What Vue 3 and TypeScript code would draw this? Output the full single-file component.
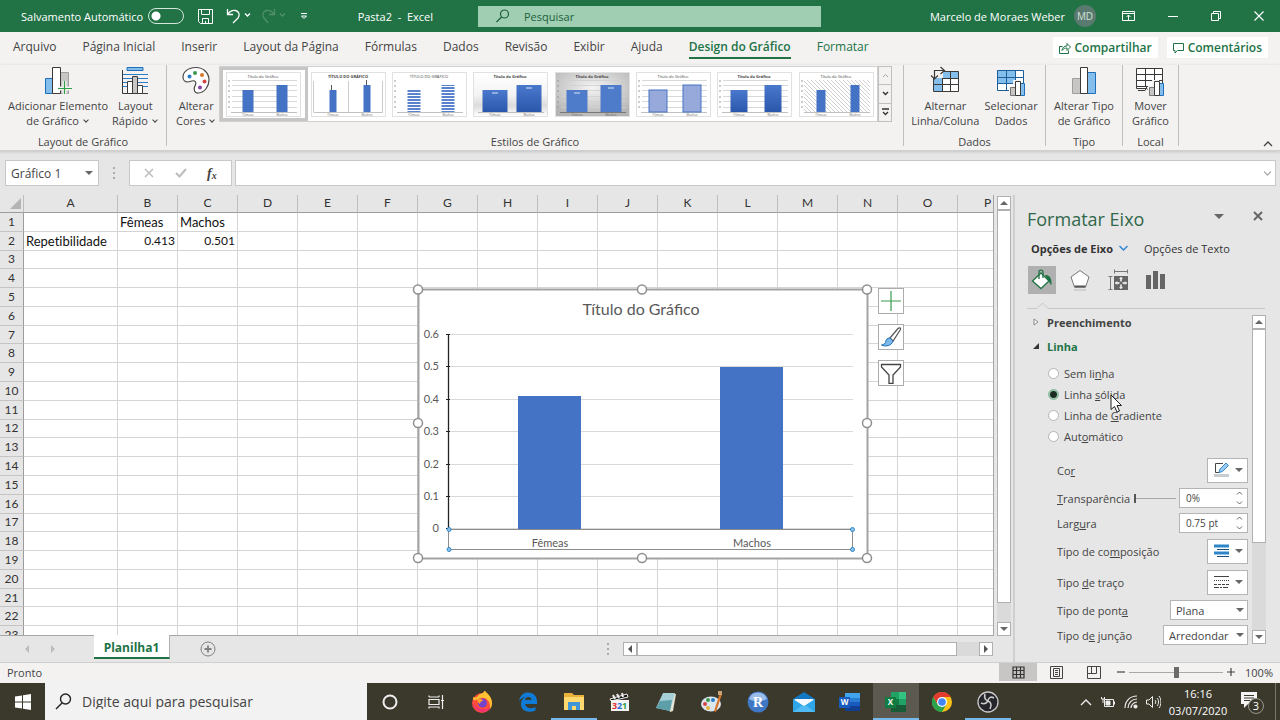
<script setup lang="ts">
import { ref } from 'vue'

interface Tab { label: string; kind?: 'active' | 'context' }
interface Thumb { id: string; title: string; w: number; fill: string; stroke: string; bg: string; weight: number; lines: boolean }
interface Row { n: number; cells: string[] }

const tabs: Tab[] = [
  { label: 'Arquivo' },
  { label: 'Página Inicial' },
  { label: 'Inserir' },
  { label: 'Layout da Página' },
  { label: 'Fórmulas' },
  { label: 'Dados' },
  { label: 'Revisão' },
  { label: 'Exibir' },
  { label: 'Ajuda' },
  { label: 'Design do Gráfico', kind: 'active' },
  { label: 'Formatar', kind: 'context' },
]

const thumbs: Thumb[] = [
  { id: 't1', title: 'Título do Gráfico', w: 11, fill: '#4472c4', stroke: 'none', bg: '#fff', weight: 400, lines: true },
  { id: 't2', title: 'TÍTULO DO GRÁFICO', w: 7, fill: '#4472c4', stroke: 'none', bg: '#fff', weight: 700, lines: false },
  { id: 't3', title: 'TÍTULO DO GRÁFICO', w: 13, fill: 'url(#stripes)', stroke: 'none', bg: '#fff', weight: 400, lines: false },
  { id: 't4', title: 'Título do Gráfico', w: 25, fill: 'url(#deep)', stroke: 'none', bg: 'url(#floor)', weight: 700, lines: false },
  { id: 't5', title: 'Título do Gráfico', w: 21, fill: '#4f7bcb', stroke: 'none', bg: 'url(#silver)', weight: 700, lines: true },
  { id: 't6', title: 'Título do Gráfico', w: 18, fill: '#97a9da', stroke: '#4472c4', bg: '#fff', weight: 400, lines: true },
  { id: 't7', title: 'Título do Gráfico', w: 17, fill: 'url(#deep)', stroke: 'none', bg: '#fff', weight: 700, lines: true },
  { id: 't8', title: 'Título do Gráfico', w: 9, fill: '#4472c4', stroke: 'none', bg: '#fff', weight: 400, lines: false },
]

const columns = 'ABCDEFGHIJKLMNOP'.split('')
const values: Record<number, string[]> = {
  1: ['', 'Fêmeas', 'Machos'],
  2: ['Repetibilidade', '0.413', '0.501'],
}
const rows: Row[] = Array.from({ length: 23 }, (_, i) => ({
  n: i + 1,
  cells: columns.map((_c, c) => values[i + 1]?.[c] ?? ''),
}))
const isNumber = (s: string): boolean => /^\d/.test(s)

const ticks = ['0.6', '0.5', '0.4', '0.3', '0.2', '0.1', '0']
const tickY = (i: number): number => 50 + Math.round(i * 32.4)

const lineKinds = [
  { id: 'none', parts: ['Sem li', 'n', 'ha'] },
  { id: 'solid', parts: ['Linha ', 's', 'ólida'] },
  { id: 'gradient', parts: ['Linha de ', 'G', 'radiente'] },
  { id: 'auto', parts: ['Aut', 'o', 'mático'] },
]
const lineKind = ref('solid')
const transparency = ref(0)
const zoom = ref(50)
</script>

<template>
  <div class="window">
    <svg class="defs" width="0" height="0" aria-hidden="true">
      <defs>
        <pattern id="stripes" width="4" height="3" patternUnits="userSpaceOnUse">
          <rect width="4" height="3" fill="#fff" /><rect width="4" height="2" fill="#5b83cd" />
        </pattern>
        <pattern id="hatch" width="4" height="4" patternUnits="userSpaceOnUse">
          <rect width="4" height="4" fill="#fff" /><path d="M0 0l4 4" stroke="#c4c4c4" stroke-width=".8" />
        </pattern>
        <linearGradient id="deep" x1="0" y1="0" x2="0" y2="1"><stop offset="0" stop-color="#4a78cd" /><stop offset="1" stop-color="#2b57ab" /></linearGradient>
        <linearGradient id="floor" x1="0" y1="0" x2="0" y2="1"><stop offset="0" stop-color="#fff" /><stop offset=".5" stop-color="#f4f4f4" /><stop offset=".75" stop-color="#dcdcdc" /><stop offset="1" stop-color="#fff" /></linearGradient>
        <radialGradient id="silver" cy=".35" r=".7"><stop offset="0" stop-color="#f4f4f4" /><stop offset="1" stop-color="#b3b3b3" /></radialGradient>
      </defs>
    </svg>

    <header class="titlebar">
      <div class="title-left">
        <label class="autosave">Salvamento Automático <input type="checkbox" role="switch" /></label>
        <button aria-label="Salvar"><svg width="16" height="16" fill="none" stroke="#fff"><path d="M.5 1.5h14v14h-12l-2-2zM3.5 1.5v5h8v-5M4.5 15.5v-5h6v5M7.5 13v2" /></svg></button>
        <button class="undo" aria-label="Desfazer"><svg width="26" height="16" fill="none" stroke="#fff" stroke-width="1.3"><path d="M1.5 1v5.500H7M1.500 6.500C4 3 7 2 9.500 2.500c4 1 4.500 5 2.500 7.500L7 15M19 5.500l2.500 2.500 2.500-2.500" /></svg></button>
        <button class="redo" aria-label="Refazer"><svg width="26" height="16" fill="none" stroke="#4f9069" stroke-width="1.3"><path d="M13.500 1v5.500H8M13.500 6.500C11 3 8 2 5.500 2.500c-4 1-4.500 5-2.500 7.500L7 15M19 5.500l2.500 2.500 2.500-2.500" /></svg></button>
        <button aria-label="Personalizar"><svg width="8" height="8" fill="none" stroke="#fff"><path d="M1 1.500h6M1.500 4h5L4 6.500z" /></svg></button>
        <span class="doc">Pasta2&nbsp; -&nbsp; Excel</span>
      </div>
      <label class="search">
        <svg width="14" height="14" fill="none" stroke="#1d5f3b" stroke-width="1.2"><circle cx="8.500" cy="5" r="4" /><path d="M5.500 8L.5 13" /></svg>
        <input type="text" placeholder="Pesquisar" aria-label="Pesquisar" />
      </label>
      <div class="title-right">
        <span>Marcelo de Moraes Weber</span>
        <span class="avatar">MD</span>
        <button aria-label="Opções da faixa"><svg width="13" height="10" fill="none" stroke="#fff"><path d="M.5.5h12v9H.5zM.5 2.500h12M6.500 9V4M4.500 6l2-2 2 2" /></svg></button>
        <button aria-label="Minimizar"><svg width="10" height="10" stroke="#fff"><path d="M0 5.500h10" /></svg></button>
        <button aria-label="Restaurar"><svg width="10" height="10" fill="none" stroke="#fff"><path d="M.5 2.500h7v7h-7zM2.500 2.500v-2h7v7h-2" /></svg></button>
        <button aria-label="Fechar"><svg width="10" height="10" stroke="#fff" stroke-width="1.2"><path d="M.5.5l9 9M9.500.5l-9 9" /></svg></button>
      </div>
    </header>

    <nav class="tabs">
      <button v-for="t in tabs" :key="t.label" :class="t.kind">{{ t.label }}</button>
      <div class="tab-actions">
        <button><svg width="12" height="12" fill="none" stroke="#217346"><path d="M3.500 4.500h-3v7h9v-3M3 8.500c.5-3 2-4.500 5-4.500V1.500L11.500 5 8 8.500V6C6 6 4.500 6.500 3 8.500z" /></svg>Compartilhar</button>
        <button><svg width="12" height="12" fill="none" stroke="#217346"><path d="M.5 1.500h10v7h-6l-2.500 2.500V8.500H.5z" /></svg>Comentários</button>
      </div>
    </nav>

    <section class="ribbon">
      <div class="group g-layout">
        <div class="tools">
          <button class="tool">
            <svg width="28" height="28"><path d="M1.500 12.500h7v15h-7z" fill="#83beec" stroke="#1e6fb8" /><path d="M16.500 6.500h8v21h-8z" fill="#c8c6c4" stroke="#a19f9d" /><path d="M8.500 1.500h8v26h-8z" fill="#fff" stroke="#3b3a39" /><path d="M20.500 15v14M14 22.500h14" stroke="#f3f2f1" stroke-width="4" /><path d="M20.500 15v13M14 22.500h14" stroke="#2f9e44" stroke-width="1.2" /></svg>
            <span>Adicionar Elemento<br />de Gráfico <i class="chev"></i></span>
          </button>
          <button class="tool">
            <svg width="28" height="28" fill="none"><path d="M6 1.500h16v3H6z" fill="#83beec" stroke="#1e6fb8" /><path d="M2 8.500h25M2 12.500h25M2 16.500h25M2 20.500h25" stroke="#2b7cc7" /><path d="M1.500 4v23.500H27" stroke="#3b3a39" /><path d="M6.500 15.500h5v12h-5zM16.500 19.500h5v8h-5z" fill="#fff" stroke="#3b3a39" /><path d="M11.500 10.500h5v17h-5z" fill="#c8c6c4" stroke="#3b3a39" /></svg>
            <span>Layout<br />Rápido <i class="chev"></i></span>
          </button>
        </div>
        <div class="caption">Layout de Gráfico</div>
      </div>

      <div class="group g-styles">
        <div class="tools">
          <button class="tool">
            <svg width="28" height="28"><path d="M14 1.500C6 1.500 1 6 1 11c0 3 2 5 4.500 5 3 0 4.500-2 7-1s1 4 0 6c-1 3 0 6.500 4 6 6-.5 10.500-6.500 10.500-13C27 6.500 21 1.500 14 1.500z" fill="#fff" stroke="#484644" stroke-width="1.2" /><circle cx="7.500" cy="10.500" r="2" fill="#2b7cc7" /><circle cx="13" cy="7" r="2" fill="#3a9b50" /><circle cx="20" cy="9" r="2" fill="#d8772a" /><circle cx="22.500" cy="15.500" r="2" fill="#d64545" /><circle cx="18" cy="21.500" r="2" fill="#8a3fa8" /></svg>
            <span>Alterar<br />Cores <i class="chev"></i></span>
          </button>
          <div class="gallery">
            <button v-for="(t, i) in thumbs" :key="t.id" :class="['thumb', { picked: i === 0 }]" :aria-label="'Estilo ' + (i + 1)">
              <svg width="75" height="45" viewBox="0 0 75 45">
                <rect x=".5" y=".5" width="74" height="44" :fill="t.bg" stroke="#e1e1e1" />
                <path v-if="t.lines" d="M6 8.500h65M6 13.500h65M6 18.500h65M6 24.500h65M6 29.500h65M6 35.500h65" stroke="#cfcfcf" stroke-width=".8" />
                <path v-if="t.id === 't2'" d="M2.500 9v31.500h69V9M37.500 9v31" fill="none" stroke="#ccc" />
                <path v-if="t.id === 't2'" d="M20.500 13v6M55.500 8v6" stroke="#555" />
                <rect v-if="t.id === 't8'" x="5" y="8" width="66" height="32" fill="url(#hatch)" />
                <path d="M5 40.500h66" :stroke="t.id === 't5' ? '#777' : '#c0c0c0'" />
                <path v-if="t.id !== 't2' && t.id !== 't4'" d="M2 9h2M2 14h2M2 19h2M2 25h2M2 30h2M2 35h2" stroke="#999" />
                <rect :x="22 - t.w / 2" :y="18" :width="t.w" height="22" :fill="t.fill" :stroke="t.stroke" />
                <rect :x="56 - t.w / 2" :y="13" :width="t.w" height="27" :fill="t.fill" :stroke="t.stroke" />
                <path v-if="t.id === 't4' || t.id === 't5'" d="M19 21h6M53 16h6" stroke="#dbe6fa" />
                <text x="37" y="6" text-anchor="middle" font-size="4" :font-weight="t.weight" fill="#444">{{ t.title }}</text>
                <text x="22" y="44" text-anchor="middle" font-size="3" fill="#666">Fêmeas</text>
                <text x="56" y="44" text-anchor="middle" font-size="3" fill="#666">Machos</text>
              </svg>
            </button>
          </div>
          <div class="gallery-nav">
            <button aria-label="Anterior"><svg width="7" height="5" fill="none" stroke="#a9a7a5"><path d="M1 4l2.500-2.500L6 4" /></svg></button>
            <button aria-label="Próximo"><svg width="7" height="5" fill="none" stroke="#333" stroke-width="1.4"><path d="M1 1l2.500 2.500L6 1" /></svg></button>
            <button aria-label="Mais"><svg width="7" height="8" fill="none" stroke="#333" stroke-width="1.3"><path d="M0 1h7M1 4l2.500 2.500L6 4" /></svg></button>
          </div>
        </div>
        <div class="caption">Estilos de Gráfico</div>
      </div>

      <div class="group g-data">
        <div class="tools">
          <button class="tool">
            <svg width="30" height="28"><path d="M3.500 6.500h25v19h-25z" fill="#fff" /><path d="M12 6h17v6H12zM4 12h8v14H4z" fill="#83beec" /><path d="M3.500 12v13.500h25V5.500H14M3.500 18.500h25M12 12.500h16.500M12.500 12v13.500M20.500 5.500v20" fill="none" stroke="#3b3a39" /><path d="M1 0h12v12H1z" fill="#f3f2f1" /><path d="M4.500 13V4.500H14M1 9.500l3.500 3.500L8 9.500M10.500 1l4 3.500-4 3.500" fill="none" stroke="#3b3a39" stroke-width="1.2" /></svg>
            <span>Alternar<br />Linha/Coluna</span>
          </button>
          <button class="tool">
            <svg width="30" height="30"><path d="M1.500 4.500h26v20h-26z" fill="#fff" /><path d="M1 4h18v13H1z" fill="#83beec" /><path d="M1.500 4.500h26v20h-26zM1.500 11.500h26M1.500 17.500h26M10.500 4.500v20M19.500 4.500v20" fill="none" stroke="#1e5f9b" /><path d="M13 20h4v-6h7v3h6v13H13z" fill="#f3f2f1" /><path d="M14.500 21.500h5v8h-5z" fill="#c8c6c4" stroke="#777" /><path d="M24.500 17.500h4v12h-4z" fill="#83beec" stroke="#1e6fb8" /><path d="M19.500 15.500h5v14h-5z" fill="#fff" stroke="#3b3a39" /></svg>
            <span>Selecionar<br />Dados</span>
          </button>
        </div>
        <div class="caption">Dados</div>
      </div>

      <div class="group g-type">
        <div class="tools">
          <button class="tool">
            <svg width="26" height="28"><path d="M1.500 12.500h8v15h-8z" fill="#c8c6c4" stroke="#a19f9d" /><path d="M16.500 6.500h8v21h-8z" fill="#83beec" stroke="#1e6fb8" /><path d="M9.500 1.500h7v26h-7z" fill="#fff" stroke="#3b3a39" /></svg>
            <span>Alterar Tipo<br />de Gráfico</span>
          </button>
        </div>
        <div class="caption">Tipo</div>
      </div>

      <div class="group g-place">
        <div class="tools">
          <button class="tool">
            <svg width="30" height="30"><path d="M1.500 2.500h26v22H14l-2-2H1.500z" fill="#fff" stroke="#3b3a39" /><path d="M1.500 8.500h26M1.500 14.500h26M1.500 20.500h26M10.500 2.500v18M19.500 2.500v18M3 24.500h7l2-4" fill="none" stroke="#3b3a39" /><path d="M13 20h4v-6h7v3h6v13H13z" fill="#f3f2f1" /><path d="M14.500 21.500h5v8h-5z" fill="#c8c6c4" stroke="#777" /><path d="M24.500 17.500h4v12h-4z" fill="#83beec" stroke="#1e6fb8" /><path d="M19.500 15.500h5v14h-5z" fill="#fff" stroke="#3b3a39" /></svg>
            <span>Mover<br />Gráfico</span>
          </button>
        </div>
        <div class="caption">Local</div>
      </div>
      <div class="ribbon-end">
        <button aria-label="Recolher"><svg width="10" height="6" fill="none" stroke="#444" stroke-width="1.3"><path d="M1 5l4-4 4 4" /></svg></button>
      </div>
    </section>

    <div class="formula">
      <label class="namebox"><input type="text" value="Gráfico 1" aria-label="Caixa de nome" /><i class="tri"></i></label>
      <span class="grip"></span>
      <div class="fx">
        <button aria-label="Cancelar"><svg width="10" height="10" stroke="#bdbdbd" stroke-width="1.5"><path d="M1 1l8 8M9 1L1 9" /></svg></button>
        <button aria-label="Inserir"><svg width="12" height="10" fill="none" stroke="#bdbdbd" stroke-width="2"><path d="M1 5l3.500 3.500L11 1" /></svg></button>
        <button class="fx-label" aria-label="Inserir função">f<small>x</small></button>
      </div>
      <label class="fbar"><input type="text" aria-label="Barra de fórmulas" /><svg width="7" height="5" fill="none" stroke="#b0b0b0" stroke-width="1.3"><path d="M0 .5l3.500 3.500L7 .5" /></svg></label>
    </div>

    <main class="work">
      <div class="book">
        <div class="sheet-row">
          <div class="sheet">
            <table>
              <colgroup><col class="c-head" /><col class="c-a" /><col v-for="n in 15" :key="n" class="c-n" /></colgroup>
              <thead>
                <tr><th class="corner"><svg width="11" height="11"><path d="M11 0v11H0z" fill="#b4b4b4" /></svg></th><th v-for="c in columns" :key="c">{{ c }}</th></tr>
              </thead>
              <tbody>
                <tr v-for="r in rows" :key="r.n">
                  <th>{{ r.n }}</th>
                  <td v-for="(v, i) in r.cells" :key="i" :class="{ num: isNumber(v) }">{{ v }}</td>
                </tr>
              </tbody>
            </table>

            <svg class="chart" width="466" height="286" viewBox="-8 -5 466 286">
              <rect x=".5" y=".5" width="449" height="269" fill="#fff" stroke="#a3a3a3" stroke-width="2" />
              <text x="223" y="26" text-anchor="middle" class="chart-title">Título do Gráfico</text>
              <g v-for="(t, i) in ticks" :key="t">
                <path :d="`M32 ${tickY(i) - 4.5}H435`" stroke="#d9d9d9" />
                <path :d="`M28 ${tickY(i) - 4.5}h4`" stroke="#222" />
                <text x="21" :y="tickY(i) - 1" text-anchor="end" class="chart-label">{{ t }}</text>
              </g>
              <path d="M100 107h63v134h-63zM302 78h63v163h-63z" fill="#4472c4" />
              <path d="M30.500 45v195" stroke="#222" stroke-width="1.3" />
              <rect x="30.500" y="240.500" width="404" height="20" fill="none" stroke="#8c8c8c" />
              <text x="132" y="258" text-anchor="middle" class="chart-label">Fêmeas</text>
              <text x="334" y="258" text-anchor="middle" class="chart-label">Machos</text>
              <g fill="#8fc3ea" stroke="#2e86c8"><circle cx="31" cy="240.500" r="2" /><circle cx="434.500" cy="240.500" r="2" /><circle cx="31" cy="260.500" r="2" /><circle cx="434.500" cy="260.500" r="2" /></g>
              <g fill="#fff" stroke="#8f8f8f" stroke-width="1.5"><circle cx="0" cy="0.500" r="4.500" /><circle cx="224" cy="0.500" r="4.500" /><circle cx="449" cy="0.500" r="4.500" /><circle cx="0" cy="134" r="4.500" /><circle cx="449" cy="134" r="4.500" /><circle cx="0" cy="269" r="4.500" /><circle cx="224" cy="269" r="4.500" /><circle cx="449" cy="269" r="4.500" /></g>
            </svg>
            <div class="chart-tools">
              <button aria-label="Elementos do gráfico"><svg width="22" height="22" stroke="#3a9b50" stroke-width="1.2"><path d="M11 1v20M1 11h20" /></svg></button>
              <button aria-label="Estilos de gráfico"><svg width="22" height="22"><path d="M10 12L18 2.500c1-1 3-1 2.500 1L13 15z" fill="#fff" stroke="#555" stroke-width="1.2" /><path d="M10 12c-3 0-4 1.500-4.500 4.500C5 18 3 18.500 1.500 19c4 2 10 1 11.500-4z" fill="#7db8e8" stroke="#1e6fb8" /></svg></button>
              <button aria-label="Filtros de gráfico"><svg width="22" height="22"><path d="M1.500 2.500h19v2.500L13 13v8.500H9V13L1.500 5z" fill="#fff" stroke="#444" stroke-width="1.3" /></svg></button>
            </div>
          </div>
          <div class="vscroll">
            <button aria-label="Acima"><i class="tri up"></i></button>
            <div class="track"><div class="bar"></div></div>
            <button aria-label="Abaixo"><i class="tri"></i></button>
          </div>
        </div>
        <div class="sheet-tabs">
          <i class="tri left pale"></i><i class="tri right pale"></i>
          <button class="sheet-tab">Planilha1</button>
          <button class="add" aria-label="Nova planilha"><svg width="16" height="16" fill="none" stroke="#808080"><circle cx="8" cy="8" r="7" /><path d="M8 4.500v7M4.500 8h7" stroke-width="1.8" /></svg></button>
          <span class="grip tab-grip"></span>
          <div class="hscroll">
            <button aria-label="Esquerda"><i class="tri left"></i></button>
            <div class="track"><div class="bar"></div></div>
            <button aria-label="Direita"><i class="tri right"></i></button>
          </div>
        </div>
      </div>

      <aside class="pane">
        <div class="pane-title"><h2>Formatar Eixo</h2><i class="tri big"></i><button aria-label="Fechar painel"><svg width="10" height="10" stroke="#666" stroke-width="2"><path d="M1 1l8 8M9 1L1 9" /></svg></button></div>
        <div class="pane-tabs">
          <button class="on">Opções de Eixo <svg width="9" height="6" fill="none" stroke="#2e86d8" stroke-width="1.4"><path d="M.5 1l4 4 4-4" /></svg></button>
          <button>Opções de Texto</button>
        </div>
        <div class="pane-icons">
          <button class="on" aria-label="Preenchimento e linha"><svg width="24" height="24"><path d="M15 7c4 0 7 2 6.500 10-2-1-2-4-4.500-6z" fill="#217346" /><path d="M11 5l8 8-8 7.500L2.500 13z" fill="#fff" stroke="#217346" stroke-width="1.3" /><path d="M9 11V4c0-2.500 4-2.500 4 0v6" fill="none" stroke="#217346" stroke-width="1.3" /></svg></button>
          <button aria-label="Efeitos"><svg width="22" height="24"><path d="M11 2.500l9 6.500-3.500 10h-11L2 9z" fill="#fff" stroke="#777" /><path d="M5.500 18.500h11" stroke="#555" stroke-width="2" /><path d="M5 22h12" stroke="#d0d0d0" stroke-width="2" /></svg></button>
          <button aria-label="Tamanho"><svg width="22" height="24"><path d="M7 8h14v14H7z" fill="#666" /><path d="M7.500 3.500h13M7.500 1.500v4M20.500 1.500v4M3.500 8.500v13M1.500 8.500h4M1.500 21.500h4" stroke="#777" /><path d="M14 9.500v11M8.500 15h11" stroke="#fff" stroke-width="1.5" stroke-dasharray="4 3" /><path d="M12.500 11L14 9.500l1.500 1.500M12.500 19l1.500 1.500 1.500-1.500M10 13.500L8.500 15l1.500 1.500M18 13.500l1.500 1.500-1.500 1.500" fill="none" stroke="#fff" /></svg></button>
          <button aria-label="Opções de eixo"><svg width="20" height="24" fill="#666"><path d="M0 7h5v14H0zM7 3h5v18H7zM14 6h5v15h-5z" /></svg></button>
        </div>
        <svg class="notch" width="238" height="9" fill="none" stroke="#c8c8c8"><path d="M0 7.500h10L15.500 2 21 7.500h217" /></svg>
        <div class="pane-body">
          <div class="options">
            <button class="section"><svg width="6" height="8" fill="#fff" stroke="#888"><path d="M1 1l4 3-4 3z" /></svg>Preenchimento</button>
            <button class="section open"><svg width="6" height="8" fill="#333"><path d="M6 1v6H0z" /></svg>Linha</button>
            <div class="radios">
              <label v-for="k in lineKinds" :key="k.id"><input v-model="lineKind" type="radio" name="line" :value="k.id" /><span>{{ k.parts[0] }}<u>{{ k.parts[1] }}</u>{{ k.parts[2] }}</span></label>
            </div>
            <div class="fields">
              <div class="field tall"><span>Co<u>r</u></span><button class="pick" aria-label="Cor"><svg width="16" height="16"><path d="M9 1.500H1.500v9H5" fill="none" stroke="#444" /><path d="M5 10.500l1-3.500 6-6 2.500 2.500-6 6z" fill="#9dcbef" stroke="#2e86c8" /><path d="M0 12h15v3H0z" fill="#c8cdd2" /></svg><i class="tri"></i></button></div>
              <div class="field"><label for="tr"><u>T</u>ransparência</label><input v-model="transparency" class="slider" type="range" aria-label="Transparência" min="0" max="100" /><div class="spin"><input id="tr" type="text" value="0%" /><svg width="7" height="14" fill="none" stroke="#666"><path d="M1 3.500L3.500 1 6 3.500M1 10.500L3.500 13 6 10.500" /></svg></div></div>
              <div class="field"><label for="lw">Larg<u>u</u>ra</label><div class="spin"><input id="lw" type="text" value="0.75 pt" /><svg width="7" height="14" fill="none" stroke="#666"><path d="M1 3.500L3.500 1 6 3.500M1 10.500L3.500 13 6 10.500" /></svg></div></div>
              <div class="field tall"><span>Tipo de co<u>m</u>posição</span><button class="pick" aria-label="Tipo de composição"><svg width="16" height="14"><path d="M0 2h15M0 9h15" stroke="#2e86c8" stroke-width="3" /><path d="M3 5.500h12M3 12.500h12" stroke="#1f4e79" /></svg><i class="tri"></i></button></div>
              <div class="field tall"><span>Tipo <u>d</u>e traço</span><button class="pick" aria-label="Tipo de traço"><svg width="16" height="14" stroke="#444"><path d="M0 1.500h15" /><path d="M0 5.500h15" stroke-dasharray="1 1" /><path d="M0 9.500h15" stroke-dasharray="3 1" /><path d="M0 12.500h15" stroke-dasharray="5 1 2 1" /></svg><i class="tri"></i></button></div>
              <div class="field"><label for="cap">Tipo de pont<u>a</u></label><div class="drop cap"><select id="cap"><option>Plana</option><option>Quadrada</option></select><i class="tri"></i></div></div>
              <div class="field"><label for="join">Tipo d<u>e</u> junção</label><div class="drop join"><select id="join"><option>Arredondar</option><option>Bisel</option></select><i class="tri"></i></div></div>
            </div>
          </div>
          <div class="pscroll">
            <button aria-label="Rolar acima"><i class="tri up"></i></button>
            <div class="track"><div class="bar"></div></div>
            <button aria-label="Rolar abaixo"><i class="tri"></i></button>
          </div>
        </div>
        <svg class="cursor" width="14" height="20"><path d="M1 1v14.500l3.500-3 2.500 5.500 2.500-1-2.500-5.500h4.500z" fill="#fff" stroke="#222" /></svg>
      </aside>
    </main>

    <footer class="status">
      <span class="ready">Pronto</span>
      <button class="view on" aria-label="Normal"><svg width="13" height="13" fill="none" stroke="#333" stroke-width="1.2"><path d="M1 1h11v11H1zM1 4.500h11M1 8.500h11M4.500 1v11M8.500 1v11" /></svg></button>
      <button class="view" aria-label="Layout da Página"><svg width="13" height="13" fill="none" stroke="#444"><path d="M.5.500h12v12H.5zM3.500 2.500h6v8h-6zM5 4.500h3M5 6.500h3M5 8.500h3" /></svg></button>
      <button class="view" aria-label="Quebra de página"><svg width="14" height="13" fill="none" stroke="#444"><path d="M.5.500h13v12H.5zM4.500.5v7M9.500.5v7M.5 7.500h9" /></svg></button>
      <button class="pm" aria-label="Reduzir"><svg width="8" height="8" stroke="#444" stroke-width="1.2"><path d="M0 4h8" /></svg></button>
      <input v-model="zoom" class="zoom" type="range" min="0" max="100" aria-label="Zoom" />
      <button class="pm" aria-label="Ampliar"><svg width="8" height="8" stroke="#444" stroke-width="1.2"><path d="M0 4h8M4 0v8" /></svg></button>
      <span class="pct">100%</span>
    </footer>

    <div class="taskbar">
      <button class="start" aria-label="Iniciar"><svg width="16" height="16" fill="#fff"><path d="M0 2.500L7 1.500v6H0zM8 1.300L16 0v7.500H8zM0 8.500h7v6l-7-1zM8 8.500h8V16l-8-1.300z" /></svg></button>
      <label class="tsearch"><svg width="17" height="17" fill="none" stroke="#222" stroke-width="1.4"><circle cx="10.500" cy="6" r="5" /><path d="M7 10L1 16" /></svg><input type="text" placeholder="Digite aqui para pesquisar" aria-label="Digite aqui para pesquisar" /></label>
      <button class="app" aria-label="Cortana"><svg width="18" height="18" fill="none" stroke="#eee" stroke-width="2"><circle cx="9" cy="9" r="6.500" /></svg></button>
      <button class="app" aria-label="Visão de tarefas"><svg width="18" height="18" fill="none" stroke="#eee" stroke-width="1.2"><path d="M2 6.500h10v5H2zM2 4V2.500M12 4V2.500M2 4h10M2 15.500V14h10v1.500M15.500 2v14M14 7.500h3" /></svg></button>
      <button class="app" aria-label="Firefox"><svg width="24" height="24"><circle cx="12" cy="13" r="10" fill="#ff4f3a" /><path d="M3 7c2 1 3 1 5-1 1-2 3-2 5-3 1-2 1.500-2 2-2 2 2 7 6 7 12 0 3-1 5-2 6 1-8-4-12-9-11S3 13 3 7z" fill="#ffc233" /><path d="M2.500 10c1 9 13 12 18 7-2 7-17 8-18-7z" fill="#f0307a" /><circle cx="12.500" cy="13" r="4.500" fill="#7542c9" /><path d="M7 9c3-1 5 0 6 2-2 0-3 1-3 3-2-1-3-3-3-5z" fill="#ffa02e" /></svg></button>
      <button class="app" aria-label="Edge"><svg width="22" height="22"><path d="M2 10C3 4 7 1.500 11 1.500c6 0 9 4 9 9.500v2H8c.5 4 6 5.500 10.500 3v3.500C11 22.500 4 20 4 13c0-4 2-6 5-7.500C6 6 3.500 8 2 10zm6-1h6.500C14.500 5 8.500 5 8 9z" fill="#0f7bd7" /></svg></button>
      <button class="app open" aria-label="Explorador"><svg width="22" height="20"><path d="M1 1h8l2 2h10v14H1z" fill="#e8b23a" /><path d="M1 5h20v13H1z" fill="#ffd970" /><path d="M5 10h12v8h-4v-4H9v4H5z" fill="#3f97d8" /></svg></button>
      <button class="app" aria-label="Media Player Classic"><svg width="22" height="22"><path d="M1 8l17-5 1 3L2 10z" fill="#111" stroke="#eee" /><path d="M4 4l2 4M8 3l2 4M13 2l1 4" stroke="#eee" stroke-width="2" /><path d="M2 9h18v11H2z" fill="#f4f4f4" /><text y="18" font-size="9" font-weight="700"><tspan x="3" fill="#d33">3</tspan><tspan x="8" fill="#2a6fd0">2</tspan><tspan x="13" fill="#2f9e44">1</tspan></text></svg></button>
      <button class="app" aria-label="Bloco de notas"><svg width="22" height="22"><path d="M8 2l13 1-3 17-3 1z" fill="#e8e4d4" /><path d="M8 2h12l-5 18-14-3z" fill="#a5d0d6" /><path d="M5 10l12-1-2 11-14-3z" fill="#5d9ea8" /></svg></button>
      <button class="app" aria-label="Paint"><svg width="24" height="22"><ellipse cx="11" cy="13" rx="10" ry="7.500" fill="#dce6ee" /><circle cx="5" cy="13" r="2" fill="#d64545" /><circle cx="8" cy="9" r="2" fill="#3a9b50" /><circle cx="13" cy="9" r="2" fill="#2b7cc7" /><circle cx="8" cy="17" r="2" fill="#e8b23a" /><path d="M20 2l2 1-6 18-2-1z" fill="#d8772a" /><path d="M18 0h4v4h-4z" fill="#c9a27a" /></svg></button>
      <button class="app" aria-label="RStudio"><svg width="22" height="22"><circle cx="11" cy="11" r="10.500" fill="#3f77c4" /><path d="M2 8a9.500 9.500 0 0 1 18 0c-5 3-13 3-18 0z" fill="#9bbce8" /><text x="11" y="16" text-anchor="middle" font-size="14" font-weight="700" class="serif" fill="#fff">R</text></svg></button>
      <button class="app" aria-label="Email"><svg width="24" height="22"><path d="M1 8l11-7 11 7v13H1z" fill="#1278c4" /><path d="M3 8h18v8H3z" fill="#e9f4fc" /><path d="M1 8l11 7 11-7v13H1z" fill="#2da6ea" /><path d="M1 21l11-8 11 8z" fill="#4fbaf3" /><path d="M2 8h20l-10 7z" fill="#f3f9fd" /></svg></button>
      <button class="app" aria-label="Word"><svg width="22" height="20"><path d="M6 1h15v5H6z" fill="#41a5ee" /><path d="M6 6h15v4H6z" fill="#2b7cd3" /><path d="M6 10h15v4H6z" fill="#185abd" /><path d="M6 14h15v5H6z" fill="#103f91" /><path d="M0 5h11v11H0z" fill="#185abd" /><text x="5.500" y="13" text-anchor="middle" font-size="8" font-weight="700" fill="#fff">W</text></svg></button>
      <button class="app open current" aria-label="Excel"><svg width="22" height="20"><path d="M6 0h15v20H6z" fill="#21a366" /><path d="M14 0h7v7h-7z" fill="#33c481" /><path d="M6 7h15v6H6z" fill="#107c41" /><path d="M6 13h15v7H6z" fill="#185c37" /><path d="M14 7h7v6h-7z" fill="#21a366" /><path d="M0 5h11v11H0z" fill="#107c41" /><text x="5.500" y="13" text-anchor="middle" font-size="8" font-weight="700" fill="#fff">X</text></svg></button>
      <button class="app" aria-label="Chrome"><svg width="22" height="22"><circle cx="11" cy="11" r="10" fill="#fbc116" /><path d="M11 6h8.700A10 10 0 0 0 2.300 6l4.300 7.500z" fill="#e33b2e" /><path d="M2.300 6a10 10 0 0 0 8.700 15l4.300-7.500H6.700z" fill="#2ba24c" /><circle cx="11" cy="11" r="5" fill="#fff" /><circle cx="11" cy="11" r="3.800" fill="#4285f4" /></svg></button>
      <button class="app open" aria-label="OBS"><svg width="22" height="22"><circle cx="11" cy="11" r="10" fill="#24242a" stroke="#c9c9c9" stroke-width="1.3" /><path d="M8 3c-1 4 0 6 3 7 0-3 3-5 6-3M11 10c3 1 4 4 2 8M11 10c-2 3-5 3-7 2" fill="none" stroke="#c9c9c9" stroke-width="1.6" /></svg></button>
      <div class="tray">
        <svg width="12" height="8" fill="none" stroke="#eee" stroke-width="1.4"><path d="M1 7l5-5 5 5" /></svg>
        <svg width="16" height="12" fill="none" stroke="#eee"><path d="M4.500 3.500h9v7h-9zM14.500 5.500v3M1.500 1v2h3V1M3 3v4" /><path d="M6 5h4v4H6z" fill="#eee" /></svg>
        <svg width="14" height="14" fill="none" stroke="#eee" stroke-width="1.2"><path d="M1 13C1 6 6 1 13 1M4 13c0-5 4-9 9-9M7 13c0-3 3-6 6-6" /><circle cx="11.500" cy="11.500" r="1.500" fill="#eee" /></svg>
        <svg width="15" height="14" fill="none" stroke="#eee"><path d="M.5 5H3l3.500-3.500v11L3 9H.5zM9 5c1 1 1 3 0 4M11 3c2 2 2 6 0 8M13 1c2.500 3 2.500 9 0 12" /></svg>
        <div class="clock"><span>16:16</span><span>03/07/2020</span></div>
        <svg class="note" width="26" height="24"><path d="M2 2h16v12H9l-4 4v-4H2z" fill="#f4f4f4" /><path d="M5 5.500h10M5 8h10M5 10.500h6" stroke="#3b382c" /><circle cx="17" cy="16" r="7.500" fill="#3b382c" stroke="#9a988e" /><text x="17" y="20" text-anchor="middle" font-size="11" fill="#fff">3</text></svg>
        <i class="peek"></i>
      </div>
    </div>
  </div>
</template>

<style>
html, body { overflow: hidden; }
</style>

<style scoped>
* { box-sizing: border-box; }
.window {
  display: flex; flex-direction: column; height: 100vh; min-height: 0;
  background: #e6e6e6; color: #444;
  font-family: "Open Sans", "Noto Sans", sans-serif; font-size: 11px; line-height: 15px;
}
.defs { position: absolute; }
button { border: 0; padding: 0; margin: 0; background: none; font: inherit; color: inherit; display: flex; align-items: center; justify-content: center; }
input, select { font: inherit; color: inherit; border: 0; padding: 0; margin: 0; background: none; min-width: 0; outline: none; }
svg { display: block; flex: none; }
.tri { display: block; flex: none; width: 0; height: 0; border: 4px solid transparent; border-top-color: #666; border-bottom-width: 0; }
.tri.up { border-top-width: 0; border-bottom: 4px solid #666; }
.tri.left { border: 4px solid transparent; border-right-color: #555; border-left-width: 0; }
.tri.right { border: 4px solid transparent; border-left-color: #555; border-right-width: 0; }
.tri.pale.left { border-right-color: #bdbdbd; }
.tri.pale.right { border-left-color: #bdbdbd; }
.tri.big { border-width: 5px 5px 0; }

.titlebar { flex: none; height: 32px; display: grid; grid-template-columns: 478px 1fr 459px; align-items: center; background: #217346; color: #fff; }
.title-left { display: flex; align-items: center; padding-left: 21px; }
.autosave { display: flex; align-items: center; gap: 5px; margin-right: 14px; white-space: nowrap; }
.autosave input { appearance: none; width: 36px; height: 16px; border: 1px solid #d5e6dc; border-radius: 8px; background: radial-gradient(circle at 7px 7px, #fff 4px, transparent 5px); }
.undo { margin-left: 12px; }
.redo { margin: 0 13px 0 9px; }
.doc { margin-left: auto; margin-right: 45px; }
.search { display: flex; align-items: center; gap: 14px; height: 21px; padding-left: 18px; background: #a0ceb2; }
.search input::placeholder { color: #1d5f3b; opacity: 1; }
.title-right { display: flex; align-items: center; justify-content: flex-end; padding-right: 16px; }
.avatar { width: 22px; height: 22px; line-height: 22px; border-radius: 11px; margin: 0 26px 0 9px; background: #5a7a70; color: #d5e0da; text-align: center; font-size: 10px; }
.title-right button + button { margin-left: 33px; }

.tabs { flex: none; height: 33px; display: flex; align-items: center; padding: 0 12px 2px 13px; gap: 26px; background: #f3f2f1; font-size: 12px; line-height: 18px; white-space: nowrap; }
.tabs > button { height: 22px; border-bottom: 2px solid transparent; }
.tabs > .active { color: #217346; font-weight: 600; border-color: #217346; }
.tabs > .context { color: #217346; }
.tab-actions { margin-left: auto; display: flex; gap: 9px; }
.tab-actions button { height: 21px; padding: 0 6px; gap: 3px; background: #fff; color: #217346; font-weight: 600; }

.ribbon { flex: none; height: 86px; display: flex; background: #f3f2f1; border-bottom: 1px solid #cfcfcf; box-shadow: 0 1px 3px #c4c4c4; position: relative; z-index: 1; }
.group { display: flex; flex-direction: column; margin-bottom: 4px; border-right: 1px solid #c0bfbe; }
.tools { display: flex; flex: 1; justify-content: center; padding-top: 1px; }
.tool { flex-direction: column; justify-content: flex-start; line-height: 15px; white-space: nowrap; }
.tool svg { height: 32px; overflow: visible; }
.caption { text-align: center; height: 14px; line-height: 20px; font-size: 11px; }
.g-layout { width: 167px; } .g-layout .tools { gap: 4px; justify-content: flex-start; padding-left: 8px; }
.g-styles { flex: 1; min-width: 0; } .g-styles .tools { justify-content: flex-start; padding-left: 9px; padding-right: 11px; }
.g-data { width: 142px; } .g-data .tools { gap: 5px; }
.g-type { width: 77px; } .g-place { width: 56px; }
.chev { display: inline-block; width: 4px; height: 4px; margin: 0 2px 3px; border: solid #444; border-width: 0 1px 1px 0; transform: rotate(45deg); }
.gallery { flex: 1; display: flex; height: 56px; margin-left: 3px; background: #fff; border: 1px solid #d2d0ce; min-width: 0; }
.thumb { flex: 1; min-width: 0; overflow: hidden; }
.thumb.picked { border: 3px solid #c6c6c6; }
.gallery-nav { display: flex; flex-direction: column; width: 14px; height: 56px; }
.gallery-nav button { flex: 1; border: 1px solid #c0bfbe; }
.gallery-nav button + button { border-top: 0; }
.ribbon-end { width: 101px; display: flex; align-items: flex-end; justify-content: flex-end; padding: 0 7px 3px 0; }

.formula { flex: none; display: flex; padding: 9px 4px 9px 5px; height: 44px; }
.formula > label, .fx { display: flex; align-items: center; background: #fff; border: 1px solid #c8c8c8; height: 26px; }
.namebox { width: 94px; padding: 0 5px 0 5px; font-size: 12px; }
.namebox input { flex: 1; }
.grip { width: 2px; height: 12px; margin: 7px 14px; background: repeating-linear-gradient(#aaa 0 2px, transparent 2px 5px); }
.fx { width: 103px; justify-content: space-around; padding: 0 4px; }
.fx-label { font-family: "Liberation Serif", serif; font-style: italic; font-weight: 700; font-size: 14px; }
.fx-label small { font-size: 10px; padding-top: 4px; }
.fbar { flex: 1; margin-left: 3px; padding-right: 4px; }
.fbar input { flex: 1; }

.work { flex: 1; min-height: 0; display: flex; }
.book { flex: 1; min-width: 0; display: flex; flex-direction: column; border-right: 2px solid #cfcfcf; }
.sheet-row { flex: 1; min-height: 0; display: flex; }
.sheet { flex: 1; min-width: 0; overflow: hidden; position: relative; border-right: 1px solid #a6a6a6; border-bottom: 1px solid #a6a6a6; }
table { border-collapse: separate; border-spacing: 0; table-layout: fixed; width: 1018px; height: 450px; font-family: Lato, sans-serif; font-size: 13px; line-height: 16px; color: #111; font-variant-ligatures: none; }
.c-head { width: 24px; } .c-a { width: 94px; } .c-n { width: 60px; }
th, td { padding: 0 2px; border-right: 1px solid #d4d4d4; border-bottom: 1px solid #d4d4d4; white-space: nowrap; overflow: hidden; }
td { background: #fff; }
th { font-weight: 400; font-size: 12px; background: #e6e6e6; color: #333; text-align: center; }
thead th { height: 18px; padding-bottom: 1px; border-bottom-color: #9c9c9c; border-right-color: #bdbdbd; }
tbody th { border-right-color: #9c9c9c; border-bottom-color: #c4c4c4; padding: 0; }
.corner svg { margin-left: auto; }
.num { text-align: right; font-size: 12px; }
.chart { position: absolute; left: 410px; top: 89px; }
.chart-title { font: 16px Lato, sans-serif; fill: #595959; }
.chart-label { font: 11px Lato, sans-serif; fill: #595959; }
.chart-tools { position: absolute; left: 878px; top: 93px; display: flex; flex-direction: column; gap: 10px; }
.chart-tools button { width: 26px; height: 26px; background: #fff; border: 1px solid #ababab; }
.vscroll { flex: none; width: 14px; margin: 1px 2px 0 3px; display: flex; flex-direction: column; }
.vscroll button, .pscroll button { height: 14px; background: #fff; border: 1px solid #b0b0b0; }
.track { flex: 1; background: #dadada; display: flex; }
.bar { background: #fff; border: 1px solid #b0b0b0; }
.vscroll .bar { width: 100%; height: calc(100% - 19px); }
.sheet-tabs { flex: none; height: 26px; display: flex; align-items: center; padding-left: 25px; }
.sheet-tabs .right.pale { margin-left: 22px; }
.sheet-tab { align-self: flex-start; width: 76px; height: 24px; padding-top: 2px; margin: -1px 30px 0 39px; background: #fff; color: #217346; font-weight: 700; font-size: 12px; border-bottom: 2px solid #217346; border-right: 1px solid #b0b0b0; position: relative; }
.tab-grip { margin: 0 14px 0 auto; }
.hscroll { display: flex; width: 370px; height: 14px; margin-right: 20px; }
.hscroll button { width: 14px; background: #fff; border: 1px solid #b0b0b0; }
.hscroll .bar { width: calc(100% - 22px); }

.pane { flex: none; width: 265px; position: relative; display: flex; flex-direction: column; padding: 12px 14px 18px 12px; color: #444; }
.pane-title { display: flex; align-items: center; height: 24px; }
.pane-title h2 { margin: 0; font-size: 18px; line-height: 24px; font-weight: 400; color: #31684a; flex: 1; }
.pane-title button { margin: 0 3px 6px 29px; } .pane-title .tri { margin-bottom: 6px; }
.pane-tabs { display: flex; gap: 16px; height: 18px; margin: 8px 0 9px 4px; color: #333; }
.pane-tabs button { gap: 6px; white-space: nowrap; } .pane-tabs .on { font-weight: 700; }
.pane-icons { display: flex; gap: 10px; padding-left: 1px; }
.pane-icons button { width: 28px; height: 28px; } .pane-icons .on { background: #b0b0b0; }
.notch { margin-top: 7px; }
.pane-body { flex: 1; min-height: 0; display: flex; margin-top: 5px; }
.options { flex: 1; min-width: 0; }
.section { gap: 8px; height: 14px; margin-left: 6px; font-weight: 700; }
.section.open { margin-top: 10px; color: #217346; }
.radios { display: flex; flex-direction: column; gap: 5px; margin: 12px 0 0 21px; }
.radios label { display: flex; align-items: center; gap: 5px; height: 16px; }
.radios input { appearance: none; width: 11px; height: 11px; border: 1px solid #b4b4b4; border-radius: 6px; background: #fff; }
.radios input:checked { border-color: #7fb796; background: radial-gradient(#1d2b22 3px, #9fcbb1 4px); }
.fields { display: flex; flex-direction: column; gap: 7px; margin: 14px 4px 0 30px; }
.field { display: flex; align-items: center; height: 18px; white-space: nowrap; }
.field > :last-child { margin-left: auto; }
.field.tall { height: 24px; }
.pick { width: 41px; height: 25px; gap: 5px; padding-left: 1px; background: #fff; border: 1px solid #b4b4b4; }
.spin { display: flex; align-items: center; width: 69px; height: 20px; padding: 0 4px 0 6px; background: #fff; border: 1px solid #b4b4b4; font-size: 10px; }
.spin input { flex: 1; }
.drop { position: relative; height: 20px; }
.drop select { appearance: none; width: 100%; height: 20px; padding-left: 5px; background: #fff; border: 1px solid #b4b4b4; border-radius: 0; }
.drop .tri { position: absolute; right: 4px; top: 8px; }
.cap { width: 78px; } .join { width: 85px; }
.slider, .zoom { appearance: none; height: 12px; background: linear-gradient(#a8a8a8, #a8a8a8) center / 100% 1px no-repeat; }
.slider { width: 42px; margin-left: 4px; }
.slider::-webkit-slider-thumb { appearance: none; width: 2px; height: 9px; background: #555; }
.pscroll { flex: none; width: 14px; display: flex; flex-direction: column; }
.pscroll .bar { width: 100%; height: 71%; }
.cursor { position: absolute; left: 95px; top: 199px; }

.status { flex: none; height: 21px; display: flex; align-items: center; padding-right: 7px; background: #f3f2f1; border-top: 1px solid #d0d0d0; font-size: 11px; padding-bottom: 2px; }
.ready { margin: 0 auto 0 7px; }
.view { width: 38px; height: 18px; } .view.on { background: #c8c6c4; }
.pm { width: 16px; }
.zoom { width: 94px; }
.zoom::-webkit-slider-thumb { appearance: none; width: 5px; height: 11px; background: #6a6a6a; }
.pct { width: 30px; margin-left: 4px; text-align: right; }

.taskbar { flex: none; height: 37px; display: flex; background: #3b382c; color: #fff; }
.start { width: 45px; }
.tsearch { width: 322px; display: flex; align-items: center; gap: 10px; padding-left: 10px; background: #f2f2f2; font-size: 14px; }
.tsearch input { flex: 1; } .tsearch input::placeholder { color: #444; opacity: 1; }
.app { width: 46px; border-bottom: 2px solid transparent; border-top: 2px solid transparent; }
.app.open { border-bottom-color: #76b9ed; }
.app.current { background: #5c5a50; border-top-color: #5c5a50; }
.serif { font-family: "Liberation Serif", serif; }
.tray { margin-left: auto; display: flex; align-items: center; gap: 8px; }
.clock { display: flex; flex-direction: column; align-items: center; width: 58px; line-height: 17px; white-space: nowrap; }
.note { margin-left: 4px; }
.peek { width: 1px; height: 37px; background: #77756c; margin: 0 4px 0 2px; }
</style>
